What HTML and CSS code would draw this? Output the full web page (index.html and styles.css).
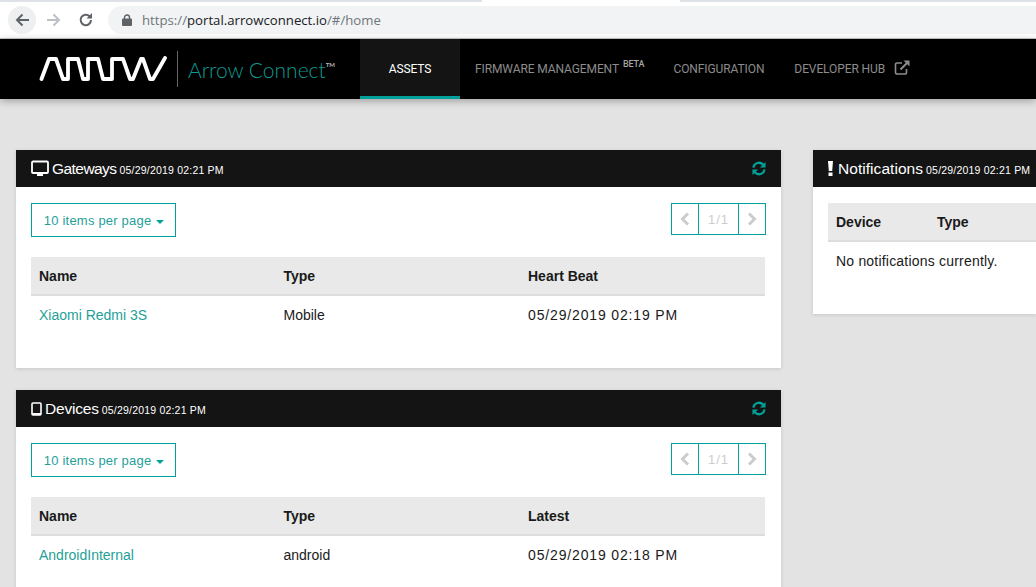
FILE: index.html
```html
<!DOCTYPE html>
<html lang="en">
<head>
<meta charset="utf-8">
<title>Arrow Connect</title>
<link rel="stylesheet" href="styles.css">
</head>
<body>
<div class="tabstrip"><div class="tab-gap"></div></div>
<div class="browser">
  <div class="nav-btn nav-btn-active">
    <svg width="16" height="16" viewBox="0 0 16 16"><path d="M15 8H3M8.500 2.500 3 8l5.500 5.500" fill="none" stroke="#5f6368" stroke-width="2"/></svg>
  </div>
  <div class="nav-btn">
    <svg width="16" height="16" viewBox="0 0 16 16"><path d="M1 8h12M7.500 2.500 13 8l-5.500 5.500" fill="none" stroke="#bdc1c6" stroke-width="2"/></svg>
  </div>
  <div class="nav-btn">
    <svg width="16" height="16" viewBox="0 0 16 16"><path d="M13 8a5.200 5.200 0 1 1-1.500-3.700" fill="none" stroke="#5f6368" stroke-width="2"/><path d="M14 1v5.500H8.500z" fill="#5f6368"/></svg>
  </div>
  <div class="omnibox">
    <svg class="lock" width="10" height="12" viewBox="0 0 10 12"><path d="M2.500 5V3.500a2.500 2.500 0 0 1 5 0V5" fill="none" stroke="#5f6368" stroke-width="1.400"/><rect y="4.500" width="10" height="7.500" rx="1" fill="#5f6368"/></svg>
    <span class="url-dim">https://</span><span class="url-host">portal.arrowconnect.io</span><span class="url-dim">/#/home</span>
  </div>
</div>
<header class="topbar">
  <div class="brand">
    <svg class="logo" width="128" height="28" viewBox="0 0 128 28"><path d="M2.500 24 10 4H17L24 24H29V4H39L44 24H49V4H59L64 24H73V4H84L91 24H94L102 4H104L111 24H114L126 3" fill="none" stroke="#fff" stroke-width="3.800" stroke-linejoin="round" stroke-linecap="round"/></svg>
    <span class="brand-sep"></span>
    <span class="brand-name">Arrow Connect<sup class="tm">TM</sup></span>
  </div>
  <nav class="menu">
    <a class="menu-item menu-active">ASSETS</a>
    <a class="menu-item">FIRMWARE MANAGEMENT <sup class="beta">BETA</sup></a>
    <a class="menu-item">CONFIGURATION</a>
    <a class="menu-item">DEVELOPER HUB
      <svg class="ext" width="16" height="15" viewBox="0 0 16 15"><path d="M8 3H3a1.500 1.500 0 0 0-1.500 1.500v8A1.500 1.500 0 0 0 3 14h8a1.500 1.500 0 0 0 1.500-1.500V9" fill="none" stroke="#8c8c8c" stroke-width="1.600"/><path d="M6.500 9.500 13 3" stroke="#8c8c8c" stroke-width="2"/><path d="M9.500 0.500H15.500V6.500z" fill="#8c8c8c"/></svg>
    </a>
  </nav>
</header>
<main class="layout">
  <div class="col-main">
    <section class="card">
      <div class="card-head">
        <h2 class="card-title">
          <svg class="ico" width="18" height="17" viewBox="0 0 18 17"><path d="M2 1.500h14a1 1 0 0 1 1 1V12a1 1 0 0 1-1 1H2a1 1 0 0 1-1-1V2.500a1 1 0 0 1 1-1z" fill="none" stroke="#fff" stroke-width="1.800"/><path d="M6 13.500h6V16H6z" fill="#fff"/></svg>
          <span class="title-tight">Gateways</span> <small class="stamp">05/29/2019 02:21 PM</small>
        </h2>
        <svg class="refresh" width="14" height="15" viewBox="0 0 15 15"><path d="M1.500 6.500A6 6 0 0 1 12 3.500" fill="none" stroke="#00a19a" stroke-width="2.400"/><path d="M14.500 0.500V6.500H8.500z" fill="#00a19a"/><path d="M13.500 8.500A6 6 0 0 1 3 11.500" fill="none" stroke="#00a19a" stroke-width="2.400"/><path d="M0.500 14.500V8.500H6.500z" fill="#00a19a"/></svg>
      </div>
      <div class="card-body">
        <div class="controls">
          <button class="per-page">10 items per page <span class="caret"></span></button>
          <div class="pager">
            <span class="pg pg-arrow"><svg width="10" height="14" viewBox="0 0 10 14"><path d="M8 1.500 2.500 7 8 12.500" fill="none" stroke="#ccc" stroke-width="3"/></svg></span>
            <span class="pg pg-num">1/1</span>
            <span class="pg pg-arrow"><svg width="10" height="14" viewBox="0 0 10 14"><path d="M2 1.500 7.500 7 2 12.500" fill="none" stroke="#ccc" stroke-width="3"/></svg></span>
          </div>
        </div>
        <table class="grid">
          <thead><tr><th class="c1">Name</th><th class="c2">Type</th><th>Heart Beat</th></tr></thead>
          <tbody><tr><td><a class="link">Xiaomi Redmi 3S</a></td><td>Mobile</td><td class="when">05/29/2019 02:19 PM</td></tr></tbody>
        </table>
      </div>
    </section>
    <section class="card">
      <div class="card-head">
        <h2 class="card-title">
          <svg class="ico" width="11" height="14" viewBox="0 0 11 14"><rect x="1" y="1" width="9" height="12" rx="1" fill="none" stroke="#fff" stroke-width="1.600"/><path d="M1 11h9v2H1z" fill="#fff"/></svg>
          Devices <small class="stamp">05/29/2019 02:21 PM</small>
        </h2>
        <svg class="refresh" width="14" height="15" viewBox="0 0 15 15"><path d="M1.500 6.500A6 6 0 0 1 12 3.500" fill="none" stroke="#00a19a" stroke-width="2.400"/><path d="M14.500 0.500V6.500H8.500z" fill="#00a19a"/><path d="M13.500 8.500A6 6 0 0 1 3 11.500" fill="none" stroke="#00a19a" stroke-width="2.400"/><path d="M0.500 14.500V8.500H6.500z" fill="#00a19a"/></svg>
      </div>
      <div class="card-body">
        <div class="controls">
          <button class="per-page">10 items per page <span class="caret"></span></button>
          <div class="pager">
            <span class="pg pg-arrow"><svg width="10" height="14" viewBox="0 0 10 14"><path d="M8 1.500 2.500 7 8 12.500" fill="none" stroke="#ccc" stroke-width="3"/></svg></span>
            <span class="pg pg-num">1/1</span>
            <span class="pg pg-arrow"><svg width="10" height="14" viewBox="0 0 10 14"><path d="M2 1.500 7.500 7 2 12.500" fill="none" stroke="#ccc" stroke-width="3"/></svg></span>
          </div>
        </div>
        <table class="grid">
          <thead><tr><th class="c1">Name</th><th class="c2">Type</th><th>Latest</th></tr></thead>
          <tbody><tr><td><a class="link">AndroidInternal</a></td><td>android</td><td class="when">05/29/2019 02:18 PM</td></tr></tbody>
        </table>
      </div>
    </section>
  </div>
  <aside class="col-side">
    <section class="card card-notes">
      <div class="card-head">
        <h2 class="card-title">
          <svg class="ico ico-bang" width="5" height="15" viewBox="0 0 5 15"><path d="M0 0h5L4.200 10H.8zM.5 11.500h4V15h-4z" fill="#fff"/></svg>
          <span class="title-wide">Notifications</span> <small class="stamp">05/29/2019 02:21 PM</small>
        </h2>
      </div>
      <div class="card-body notes-body">
        <table class="grid notes-grid">
          <thead><tr><th class="n1">Device</th><th>Type</th></tr></thead>
          <tbody><tr><td colspan="2" class="note-msg">No notifications currently.</td></tr></tbody>
        </table>
      </div>
    </section>
  </aside>
</main>
</body>
</html>
```

FILE: styles.css
```css
* { box-sizing: border-box; }
html, body { margin: 0; padding: 0; height: 587px; overflow: hidden; }
body { background: #e3e3e3; font-family: "Liberation Sans", Arial, sans-serif; font-size: 14px; color: #1a1a1a; width: 1036px; }

.tabstrip { height: 6px; background: #fff; }
.tab-gap { height: 2px; background: linear-gradient(to right, #dee1e6 482px, #fff 482px, #fff 680px, #dee1e6 680px); }

.browser { height: 33px; background: #fff; display: flex; align-items: flex-start; padding-left: 8px; gap: 4px; border-bottom: 1px solid #c8c8c8; }
.nav-btn { width: 28px; height: 28px; border-radius: 50%; display: flex; align-items: center; justify-content: center; flex: none; }
.nav-btn-active { background: #eeeff0; }
.omnibox { flex: 1; height: 28px; background: #f1f3f4; border-radius: 14px 0 0 14px; margin-left: 4px; display: flex; align-items: center; padding-left: 14px; font-family: "Open Sans", sans-serif; font-size: 13.200px; }
.lock { margin-right: 10px; }
.url-dim { color: #70757a; }
.url-host { color: #202124; }

.topbar { height: 60px; background: #000; display: flex; box-shadow: 0 2px 8px rgba(0,0,0,.3); position: relative; }
.brand { width: 360px; display: flex; align-items: center; padding-left: 39px; }
.logo { flex: none; }
.brand-sep { width: 1px; height: 36px; background: #666; margin: 0 10px; }
.brand-name { font-family: Lato, sans-serif; font-weight: 300; font-size: 21px; color: #0f9a92; white-space: nowrap; }
.tm { font-size: 6px; color: #bbb; vertical-align: 11px; line-height: 0; font-weight: 700; }

.menu { display: flex; }
.menu-item { font-family: Roboto, sans-serif; font-size: 12px; letter-spacing: -.1px; color: #8c8c8c; padding: 0 15px; display: flex; align-items: center; gap: 3px; white-space: nowrap; height: 60px; }
.menu-active { width: 100px; justify-content: center; background: #141414; color: #fff; box-shadow: inset 0 -3px #00a19a; padding: 0; }
.beta { font-size: 9px; line-height: 0; color: #a5a5a5; margin-top: -11px; margin-right: -1px; margin-left: 1px; font-weight: 500; }
.ext { margin-top: -3px; margin-left: 6px; }

.layout { display: flex; gap: 32px; padding: 51px 0 0 16px; }
.col-main { width: 765px; flex: none; display: flex; flex-direction: column; gap: 22px; }
.col-side { width: 223px; flex: none; }

.card { background: #fff; box-shadow: 0 1px 4px rgba(0,0,0,.12); height: 218px; }
.card-notes { height: 164px; }
.card-head { height: 37px; background: #141414; display: flex; align-items: center; justify-content: space-between; padding: 0 15px; }
.card-title { margin: 0; font-size: 15.500px; font-weight: 400; color: #fff; white-space: nowrap; letter-spacing: -.2px; display: flex; align-items: center; }
.title-tight { letter-spacing: -.55px; }
.title-wide { letter-spacing: .05px; }
.ico { margin-right: 3px; flex: none; }
.ico-bang { margin-right: 5px; }
.stamp { font-size: 10.500px; margin-left: 3px; margin-top: 3px; letter-spacing: .2px; }
.card-body { padding: 16px 15px 0; }
.notes-body { padding-right: 0; }

.controls { display: flex; justify-content: space-between; align-items: flex-start; height: 54px; }
.per-page { width: 145px; height: 34px; background: #fff; border: 1px solid #00a19a; color: #1f9f98; font: 13px "Liberation Sans", Arial, sans-serif; letter-spacing: .2px; padding: 0 0 0 1px; }
.caret { display: inline-block; width: 0; height: 0; border: 4px solid transparent; border-top-color: #00a19a; border-bottom: 0; vertical-align: 1px; margin-left: 1px; }
.pager { display: flex; height: 32px; border: 1px solid #00a19a; }
.pg { display: flex; align-items: center; justify-content: center; }
.pg-arrow { width: 26px; }
.pg-num { width: 41px; border-left: 1px solid #00a19a; border-right: 1px solid #00a19a; color: #ccc; font-size: 13px; letter-spacing: 1px; }

.grid { width: 734px; border-collapse: separate; border-spacing: 0; table-layout: fixed; font-size: 14px; }
.grid th { height: 39px; background: #e9e9e9; border-bottom: 2px solid #ddd; text-align: left; font-weight: 700; padding: 1px 8px 0; }
.grid td { height: 38px; padding: 0 8px; vertical-align: middle; }
.c1, .c2 { width: 244.500px; }
.link { color: #1f9f98; }
.when { letter-spacing: .85px; white-space: nowrap; }
.notes-grid { width: 208px; }
.n1 { width: 101px; }
.note-msg { letter-spacing: .2px; white-space: nowrap; }
```
